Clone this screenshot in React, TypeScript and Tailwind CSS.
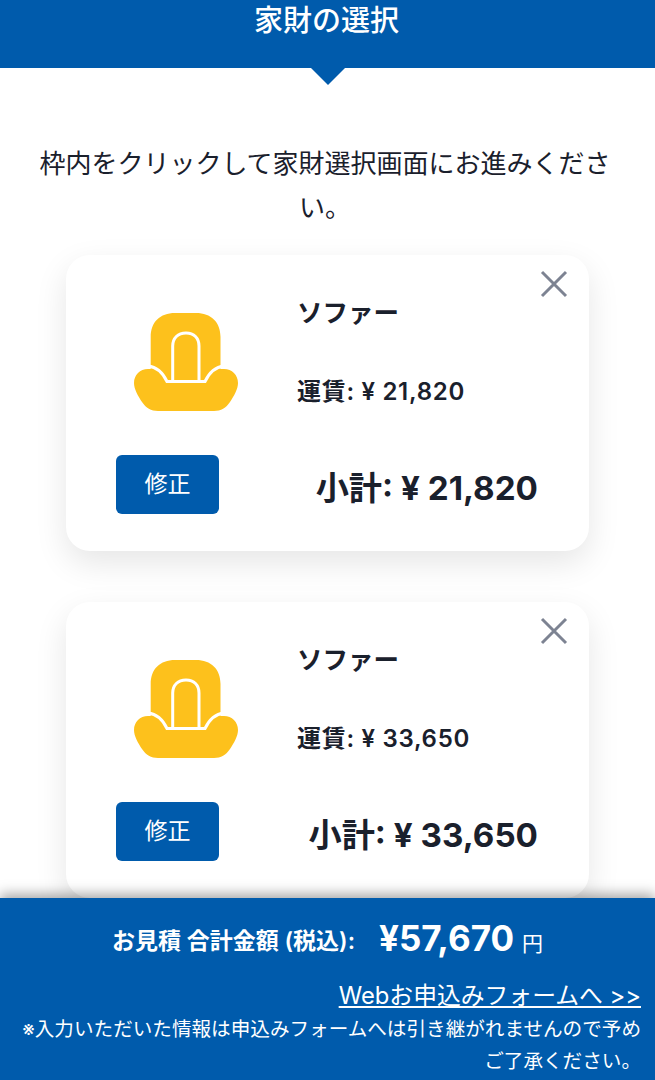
import React from 'react';

const FONT = "font-['Inter','Noto_Sans_CJK_JP',sans-serif]";

const items = [
    { name: 'ソファー', fare: '¥ 21,820', subtotal: '¥ 21,820' },
    { name: 'ソファー', fare: '¥ 33,650', subtotal: '¥ 33,650' },
];

const SofaIcon = () => (
    <svg width="104" height="98" viewBox="0 0 104 98" fill="none">
        {/* body */}
        <path
            d="M16.7 56V24C16.7 9 26 0 41 0H62C77 0 86.5 9 86.5 24V56H90C98 56 104 62 104 70C104 76 100 83 96 89C92 95 87 98 80 98H24C17 98 12 95 8 89C4 83 0 76 0 70C0 62 6 56 14 56Z"
            fill="#fdc11c"
        />
        <path d="M14 53C23 54 29 60 33 68.5H71C75 60 81 54 90 53" stroke="#ffffff" strokeWidth="3" fill="none" />
        <path d="M38.7 68.5V33C38.7 25 44 20 52 20C60 20 65 25 65 33V68.5" stroke="#ffffff" strokeWidth="3" fill="none" />
    </svg>
);

const ItemCard = ({ name, fare, subtotal }: { name: string; fare: string; subtotal: string }) => (
    <div className="relative h-[296px] w-[523px] shrink-0 rounded-3xl bg-white px-[50px] pt-[45px] shadow-[0_12px_32px_rgba(0,0,0,0.10)]">
        <button className="absolute right-[20px] top-[14px] text-[#7d8392]">
            <svg width="30" height="30" viewBox="0 0 30 30" fill="none" stroke="currentColor" strokeWidth="3">
                <path d="M3 3L27 27M27 3L3 27" />
            </svg>
        </button>
        <div className="flex">
            <div className="flex w-[181px] shrink-0 pl-[18px] pt-[13px]">
                <SofaIcon />
            </div>
            <div className="pt-[1px] text-[#1a202c]">
                <div className="text-[25.5px] font-bold leading-[24px]">{name}</div>
                <div className="mt-[50px] whitespace-nowrap text-[24px] font-semibold leading-[34px] tracking-[0.7px]">
                    運賃: {fare}
                </div>
            </div>
        </div>
        <div className="mt-[44px] flex items-center justify-between pr-[1px]">
            <button className="flex h-[59px] w-[103px] items-center justify-center rounded-md bg-[#005bac] text-[23px] text-white">
                修正
            </button>
            <div className="mt-[6px] text-[33.2px] font-bold leading-[40px] text-[#1a202c]">小計: {subtotal}</div>
        </div>
    </div>
);

const App: React.FC = () => {
    return (
        <div className={`flex h-screen flex-col overflow-hidden bg-white ${FONT}`}>
            <main className="min-h-0 flex-1 overflow-hidden">
                {/* Header */}
                <header className="relative h-[68px] bg-[#005bac] pr-[2px] text-center text-[29px] font-medium leading-[42px] text-white">
                    家財の選択
                    <div className="absolute left-1/2 top-full h-0 w-0 -translate-x-1/2 border-x-[17px] border-t-[17px] border-x-transparent border-t-[#005bac]" />
                </header>

                <p className="ml-[35px] mt-[74px] w-[580px] text-center text-[26px] leading-[44px] text-[#1a202c]">
                    枠内をクリックして家財選択画面にお進みください。
                </p>

                {/* Cards */}
                <div className="mt-[25px] flex flex-col items-center gap-[51px]">
                    {items.map((item, i) => (
                        <ItemCard key={i} {...item} />
                    ))}
                </div>
            </main>

            {/* Footer */}
            <footer className="relative h-[182px] shrink-0 bg-[#005bac] px-[14px] text-white shadow-[0_-4px_12px_rgba(0,0,0,0.35)]">
                <div className="flex items-baseline justify-center pt-[17px]">
                    <span className="-translate-y-[2px] whitespace-nowrap text-[23px] font-semibold">お見積 合計金額 (税込):</span>
                    <span className="ml-[24px] text-[35px] font-bold leading-[46px]">¥57,670</span>
                    <span className="ml-[8px] text-[21px]">円</span>
                </div>
                <div className="mt-[19px] text-right text-[23.8px] leading-[32px] underline underline-offset-2">
                    Webお申込みフォームへ &gt;&gt;
                </div>
                <p className="-ml-[2px] mt-[1px] text-right text-[19.6px] leading-[32px]">
                    ※入力いただいた情報は申込みフォームへは引き継がれませんので予めご了承ください。
                </p>
            </footer>
        </div>
    );
};

export default App;
